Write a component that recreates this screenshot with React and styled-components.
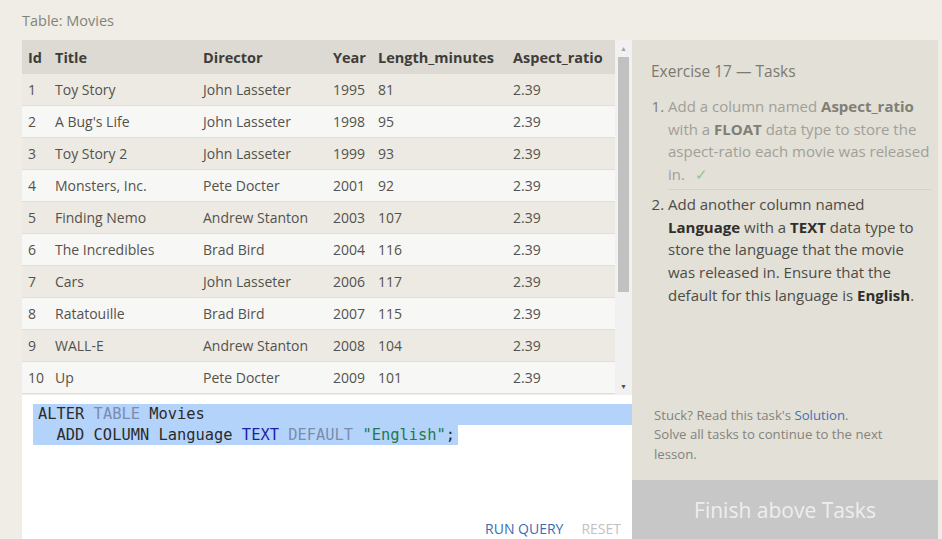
import React from "react";
import styled, { createGlobalStyle } from "styled-components";

const GlobalStyle = createGlobalStyle`
  html, body {
    margin: 0;
    padding: 0;
    background: #efede6;
    font-family: "Open Sans", "Noto Sans", sans-serif;
  }
`;

const Page = styled.div`
  width: 942px;
  height: 539px;
  display: flex;
  flex-direction: column;
  overflow: hidden;
`;

const Caption = styled.div`
  height: 40px;
  padding-left: 22px;
  display: flex;
  align-items: center;
  font-size: 14.5px;
  color: #858379;
`;

const Body = styled.div`
  flex: 1;
  display: flex;
  padding-left: 22px;
`;

const LeftCol = styled.div`
  width: 610px;
  display: flex;
  flex-direction: column;
`;

const TableArea = styled.div`
  height: 355px;
  display: flex;
`;

const Grid = styled.div`
  flex: 1;
  display: flex;
  flex-direction: column;
`;

const Row = styled.div`
  display: grid;
  grid-template-columns: 27px 148px 130px 45px 135px 108px;
  height: ${(p) => (p.$head ? "34px" : "32px")};
  align-items: center;
  background: ${(p) => (p.$head ? "#dcdad2" : p.$odd ? "#eceae3" : "#f7f7f5")};
  border-bottom: ${(p) => (p.$head ? "none" : "1px solid #e0ded8")};
  box-sizing: border-box;
  color: ${(p) => (p.$head ? "#3e3d3a" : "#54524d")};
  font-weight: ${(p) => (p.$head ? 700 : 400)};
  font-size: ${(p) => (p.$head ? "14.5px" : "14px")};
`;

const Cell = styled.div`
  padding-left: 6px;
  white-space: nowrap;
`;

const Scrollbar = styled.div`
  width: 17px;
  background: #f1f1f1;
  display: flex;
  flex-direction: column;
  align-items: center;
`;

const Arrow = styled.div`
  height: 17px;
  width: 17px;
  display: flex;
  align-items: center;
  justify-content: center;
  color: ${(p) => (p.$dim ? "#a3a3a3" : "#505050")};
  font-size: 7px;
`;

const Thumb = styled.div`
  width: 11px;
  height: 235px;
  background: #c1c1c1;
`;

const Spacer = styled.div`
  flex: 1;
`;

const Editor = styled.div`
  flex: 1;
  background: #ffffff;
  position: relative;
  padding-top: 9px;
`;

const CodeLine = styled.div`
  font-family: "DejaVu Sans Mono", "Liberation Mono", monospace;
  font-size: 15.4px;
  line-height: 20.5px;
  color: #2b2b2b;
  white-space: pre;
  margin-left: 11px;
  padding-left: 5px;
  background: #b4d3fb;
  width: ${(p) => (p.$full ? "auto" : "max-content")};
  padding-right: ${(p) => (p.$full ? "0" : "3px")};
`;

const Kw = styled.span`
  color: ${(p) => p.$c};
`;

const Actions = styled.div`
  position: absolute;
  right: 11px;
  bottom: 1px;
  display: flex;
  gap: 18px;
  font-size: 14px;
`;

const Action = styled.span`
  color: ${(p) => (p.$muted ? "#c2c2c2" : "#3b6cb0")};
`;

const RightCol = styled.div`
  width: 306px;
  display: flex;
  flex-direction: column;
`;

const Panel = styled.div`
  flex: 1;
  background: #e2e0d7;
  padding: 20px 7px 0 19px;
  display: flex;
  flex-direction: column;
`;

const PanelTitle = styled.div`
  font-size: 15.5px;
  color: #7b7970;
  margin-bottom: 13px;
`;

const TaskList = styled.ol`
  margin: 0;
  padding: 0 0 0 17px;
  font-size: 15px;
  line-height: 22.7px;
`;

const Task = styled.li`
  color: ${(p) => (p.$done ? "#a19f97" : "#4e4c46")};
  padding-bottom: ${(p) => (p.$done ? "3px" : "0")};
  margin-bottom: 3px;
  border-bottom: ${(p) => (p.$done ? "1px solid #d4d2c9" : "none")};
  &::marker {
    color: ${(p) => (p.$done ? "#807e76" : "#4e4c46")};
  }
  b {
    color: ${(p) => (p.$done ? "#807e76" : "#2f2e2a")};
  }
`;

const Check = styled.span`
  color: #8fc58f;
  margin-left: 10px;
`;

const Footer = styled.div`
  margin-top: auto;
  padding: 0 35px 16px 3px;
  font-size: 13.2px;
  line-height: 19.5px;
  color: #85837b;
`;

const Link = styled.span`
  color: #4470b4;
`;

const Finish = styled.div`
  height: 59px;
  background: #c7c7c7;
  color: #eeeeee;
  font-size: 21px;
  display: flex;
  align-items: center;
  justify-content: center;
`;

const movies = [
  [1, "Toy Story", "John Lasseter", 1995, 81],
  [2, "A Bug's Life", "John Lasseter", 1998, 95],
  [3, "Toy Story 2", "John Lasseter", 1999, 93],
  [4, "Monsters, Inc.", "Pete Docter", 2001, 92],
  [5, "Finding Nemo", "Andrew Stanton", 2003, 107],
  [6, "The Incredibles", "Brad Bird", 2004, 116],
  [7, "Cars", "John Lasseter", 2006, 117],
  [8, "Ratatouille", "Brad Bird", 2007, 115],
  [9, "WALL-E", "Andrew Stanton", 2008, 104],
  [10, "Up", "Pete Docter", 2009, 101],
];

const headers = ["Id", "Title", "Director", "Year", "Length_minutes", "Aspect_ratio"];

export default function App() {
  return (
    <Page>
      <GlobalStyle />
      <Caption>Table: Movies</Caption>
      <Body>
        <LeftCol>
          <TableArea>
            <Grid>
              <Row $head>
                {headers.map((h) => (
                  <Cell key={h}>{h}</Cell>
                ))}
              </Row>
              {movies.map((m, i) => (
                <Row key={m[0]} $odd={i % 2 === 0}>
                  {m.map((v, j) => (
                    <Cell key={j}>{v}</Cell>
                  ))}
                  <Cell>2.39</Cell>
                </Row>
              ))}
            </Grid>
            <Scrollbar>
              <Arrow $dim>▲</Arrow>
              <Thumb />
              <Spacer />
              <Arrow>▼</Arrow>
            </Scrollbar>
          </TableArea>
          <Editor>
            <CodeLine $full>
              ALTER <Kw $c="#7b8cad">TABLE</Kw> Movies
            </CodeLine>
            <CodeLine>
              {"  ADD COLUMN Language "}
              <Kw $c="#1f1fa6">TEXT</Kw> <Kw $c="#7b8cad">DEFAULT</Kw>{" "}
              <Kw $c="#237848">"English"</Kw>;
            </CodeLine>
            <Actions>
              <Action>RUN QUERY</Action>
              <Action $muted>RESET</Action>
            </Actions>
          </Editor>
        </LeftCol>
        <RightCol>
          <Panel>
            <PanelTitle>Exercise 17 — Tasks</PanelTitle>
            <TaskList>
              <Task $done>
                Add a column named <b>Aspect_ratio</b> with a <b>FLOAT</b> data
                type to store the aspect-ratio each movie was released in.
                <Check>✓</Check>
              </Task>
              <Task>
                Add another column named <b>Language</b> with a <b>TEXT</b> data
                type to store the language that the movie was released in.
                Ensure that the default for this language is <b>English</b>.
              </Task>
            </TaskList>
            <Footer>
              Stuck? Read this task's <Link>Solution</Link>.
              <br />
              Solve all tasks to continue to the next lesson.
            </Footer>
          </Panel>
          <Finish>Finish above Tasks</Finish>
        </RightCol>
      </Body>
    </Page>
  );
}
